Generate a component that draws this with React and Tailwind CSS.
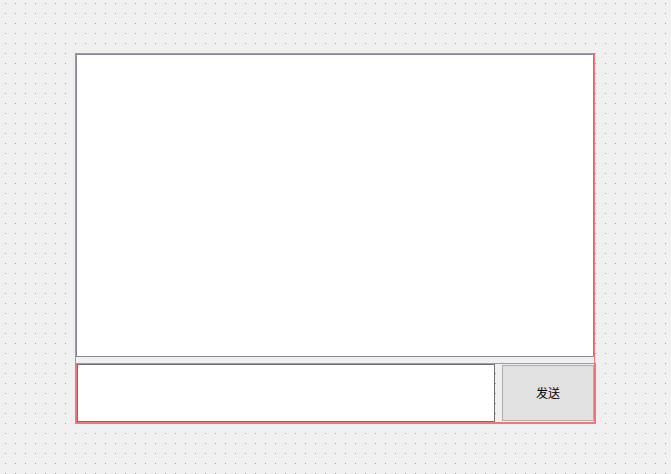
import React from 'react';

// Qt Designer style form: dotted canvas, text browser, line edit + send button
export default function App() {
  return (
    <div className="w-[671px] h-[474px] bg-[#f0f0f0] bg-[conic-gradient(from_270deg_at_1px_1px,#a0a0a0_90deg,transparent_0)] bg-[size:10px_10px] bg-[position:5px_3px] pt-[53px] pl-[75px] overflow-hidden">
      <div className="w-[520px] h-[371px] border border-[#f37575] flex flex-col">
        {/* Text browser */}
        <div className="h-[303px] w-full bg-white border border-[#878a94]" />

        {/* Horizontal layout */}
        <div className="mt-[6px] w-[520px] h-[60px] border border-[#f37575] flex items-center">
          <input
            type="text"
            className="w-[418px] h-[58px] bg-white border border-[#6f7177] outline-none"
          />
          <button className="ml-[7px] w-[92px] h-[56px] bg-[#e1e1e1] border border-[#adadad] text-[12px] text-black font-['Noto_Sans_CJK_SC',sans-serif]">
            发送
          </button>
        </div>
      </div>
    </div>
  );
}
